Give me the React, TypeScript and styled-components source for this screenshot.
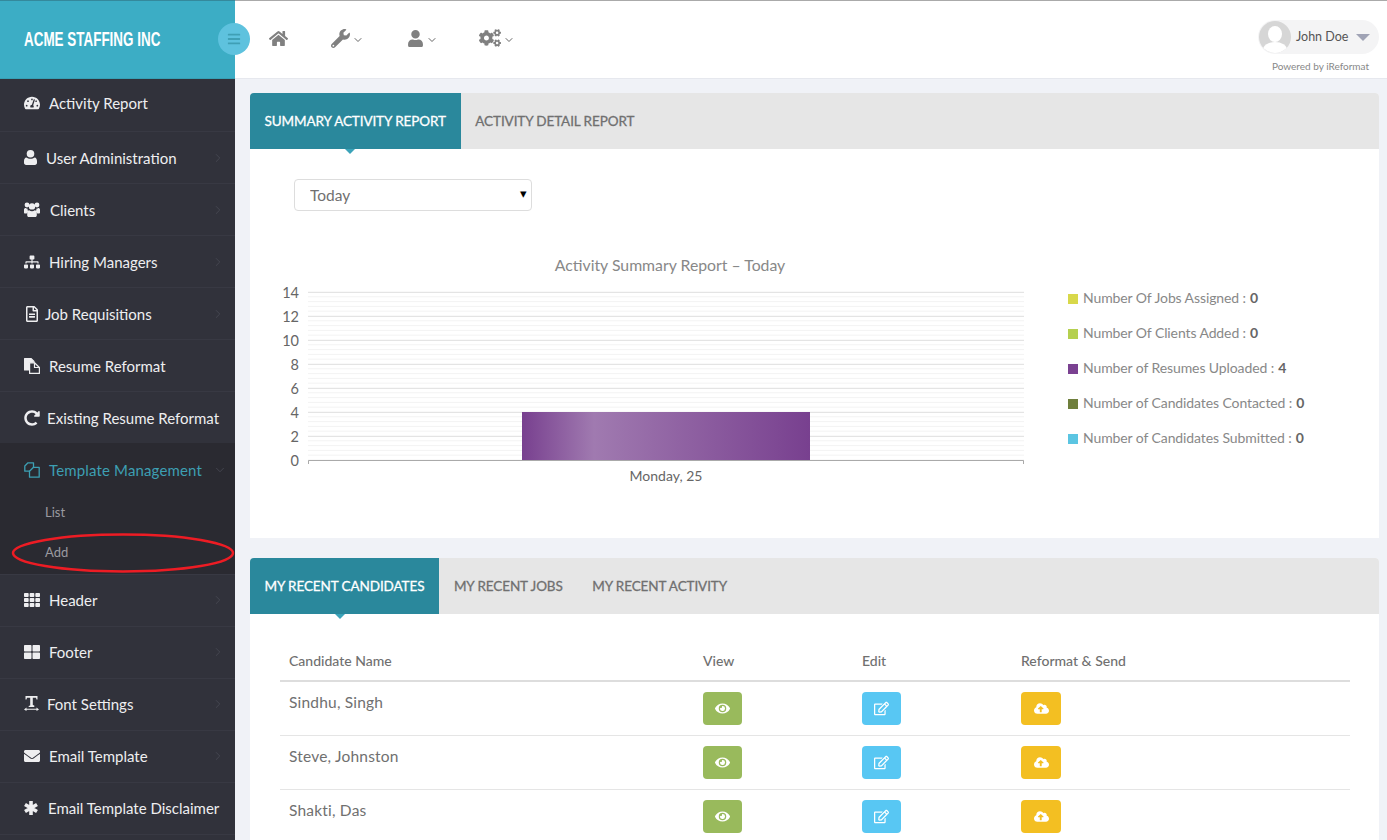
import React from 'react';
import styled, { createGlobalStyle } from 'styled-components';
import { ChevronDown, ChevronRight } from 'lucide-react';
import {
  FaBars,
  FaCloudUploadAlt,
  FaCogs,
  FaEnvelope,
  FaEye,
  FaHome,
  FaRedoAlt,
  FaRegEdit,
  FaRegFileAlt,
  FaSitemap,
  FaTachometerAlt,
  FaTh,
  FaThLarge,
  FaUser,
  FaWrench,
} from 'react-icons/fa';

const GlobalStyle = createGlobalStyle`
  html, body {
    margin: 0;
    height: 100%;
    overflow: hidden;
    background: #f0f2f7;
    font-family: Lato, "Open Sans", sans-serif;
  }
  * { box-sizing: border-box; }
`;

const Page = styled.div`
  display: flex;
  height: 840px;
  overflow: hidden;
`;

const Sidebar = styled.aside`
  width: 235px;
  flex: none;
  background: #31323b;
`;

const Brand = styled.div`
  position: relative;
  height: 79px;
  padding: 0 0 2px 24px;
  display: flex;
  align-items: center;
  background: #3cadc5;
  border-top: 1px solid #34899c;
  border-bottom: 1px solid #36a0b6;
`;

const BrandName = styled.span`
  color: #fff;
  font-family: "Liberation Sans", sans-serif;
  font-size: 21px;
  font-weight: 700;
  white-space: nowrap;
  transform: scaleX(0.64);
  transform-origin: left center;
`;

const Toggle = styled.div`
  position: absolute;
  left: 218px;
  top: 22px;
  width: 32px;
  height: 32px;
  border-radius: 50%;
  background: #5ec2de;
  color: #3f9fb5;
  display: flex;
  align-items: center;
  justify-content: center;
  font-size: 14px;
`;

const NavRow = styled.div<{ $first?: boolean; $open?: boolean; $tail?: boolean }>`
  height: 52px;
  display: flex;
  align-items: center;
  padding: ${(p) => (p.$first ? '0 10px 6px 24px' : p.$tail ? '0 10px 2px 24px' : p.$open ? '0 8px 0 24px' : '0 10px 0 24px')};
  border-top: 1px solid ${(p) => (p.$first || p.$open ? 'transparent' : '#383943')};
  color: ${(p) => (p.$open ? '#3d9fb3' : '#eeeef0')};
  font-size: 15px;
  letter-spacing: ${(p) => (p.$open ? '0.15px' : '0')};
  white-space: nowrap;
`;

const NavEnd = styled.div`
  border-top: 1px solid #383943;
`;

const NavIcon = styled.span<{ $w: number }>`
  width: ${(p) => p.$w}px;
  flex: none;
  display: flex;
  font-size: 16px;
`;

const NavLabel = styled.span`
  flex: 1;
`;

const NavArrow = styled.span`
  display: flex;
  color: #474852;
`;

const OpenGroup = styled.div`
  position: relative;
  height: 131px;
  background: #2a2a31;
`;

const SubItem = styled.div`
  height: 40px;
  padding: 0 0 6px 45px;
  display: flex;
  align-items: center;
  color: #9a9aa0;
  font-size: 13px;
`;

const Circled = styled.svg`
  position: absolute;
  left: 11px;
  top: 89px;
  width: 224px;
  height: 42px;
`;

const Main = styled.main`
  flex: 1;
  min-width: 0;
`;

const TopBar = styled.header`
  height: 79px;
  background: #fff;
  border-top: 1px solid #aaa;
  border-bottom: 1px solid #e6e8ee;
  display: flex;
  justify-content: space-between;
  padding-left: 34px;
  padding-right: 8px;
`;

const TopIcons = styled.div`
  display: flex;
  padding-top: 27px;
  color: #808080;
`;

const TopIcon = styled.span<{ $w: number; $size: number }>`
  width: ${(p) => p.$w}px;
  height: 20px;
  display: flex;
  align-items: center;
  gap: 2px;
  font-size: ${(p) => p.$size}px;
`;

const Chevron = styled.span`
  display: flex;
  margin-top: 3px;
  color: #666;
`;

const UserBox = styled.div`
  display: flex;
  flex-direction: column;
  align-items: flex-end;
  padding-top: 19px;
`;

const UserPill = styled.div`
  width: 121px;
  height: 34px;
  padding: 0 9px 0 1px;
  border-radius: 17px;
  background: #f4f4f5;
  display: flex;
  align-items: center;
  color: #555;
  font-size: 12.5px;
`;

const UserName = styled.span`
  flex: 1;
  margin: 0 0 1px 5px;
`;

const Caret = styled.span`
  width: 0;
  height: 0;
  border-left: 7.5px solid transparent;
  border-right: 7.5px solid transparent;
  border-top: 7px solid #a0a3b5;
`;

const Powered = styled.div`
  margin: 6px 10px 0 0;
  color: #888;
  font-size: 10px;
`;

const Content = styled.div`
  padding: 14px 8px 0 15px;
  display: flex;
  flex-direction: column;
  gap: 20px;
`;

const Panel = styled.section<{ $h?: number }>`
  background: #fff;
  border-radius: 4px 4px 0 0;
  height: ${(p) => (p.$h ? `${p.$h}px` : 'auto')};
`;

const Tabs = styled.div`
  display: flex;
  height: 56px;
  background: #e6e6e6;
  border-radius: 4px 4px 0 0;
`;

const Tab = styled.div<{ $active?: boolean }>`
  position: relative;
  padding: 0 15px 1px 14.5px;
  display: flex;
  align-items: center;
  color: ${(p) => (p.$active ? '#fff' : '#707070')};
  background: ${(p) => (p.$active ? '#2a889c' : 'transparent')};
  border-radius: ${(p) => (p.$active ? '4px 0 0 0' : '0')};
  font-size: 13.5px;
  letter-spacing: -0.1px;
  -webkit-text-stroke: 0.3px currentColor;
  white-space: nowrap;

  ${(p) =>
    p.$active &&
    `&::after {
      content: '';
      position: absolute;
      left: 50%;
      bottom: -5px;
      margin-left: -10px;
      border-left: 5px solid transparent;
      border-right: 5px solid transparent;
      border-top: 5px solid #3ba3b9;
    }`}
`;

const SelectWrap = styled.div`
  position: relative;
  width: 238px;
  margin: 30px 0 0 44px;

  &::after {
    content: '▾';
    position: absolute;
    right: 5px;
    top: 6px;
    color: #000;
    font-size: 13px;
  }
`;

const RangeSelect = styled.select`
  width: 100%;
  height: 32px;
  padding-left: 15px;
  border: 1px solid #ddd;
  border-radius: 4px;
  background: #fff;
  color: #707070;
  font-family: inherit;
  font-size: 15.5px;
  appearance: none;
`;

const ChartRow = styled.div`
  display: flex;
  margin-top: 44px;
`;

const ChartArea = styled.div`
  width: 818px;
  flex: none;
`;

const ChartTitle = styled.div`
  height: 27px;
  padding-left: 22px;
  text-align: center;
  color: #888;
  font-size: 15.8px;
`;

const ChartSvg = styled.svg`
  display: block;
  width: 818px;
  height: 220px;
`;

const Legend = styled.ul`
  list-style: none;
  margin: 25px 0 0 0;
  padding: 0;
`;

const LegendItem = styled.li`
  height: 35px;
  display: flex;
  align-items: center;
  color: #888;
  font-size: 14px;
  letter-spacing: -0.1px;
`;

const Swatch = styled.span<{ $color: string }>`
  width: 10px;
  height: 10px;
  margin: 2px 5px 0 0;
  background: ${(p) => p.$color};
`;

const LegendValue = styled.b`
  margin-left: 4px;
  color: #666;
`;

const TableWrap = styled.div`
  padding: 20px 29px 0 30px;
`;

const Table = styled.table`
  width: 100%;
  border-collapse: collapse;
  table-layout: fixed;
`;

const Th = styled.th<{ $w?: number }>`
  width: ${(p) => (p.$w ? `${p.$w}px` : 'auto')};
  height: 47px;
  padding: 6px 9px 0;
  border-bottom: 2px solid #ddd;
  text-align: left;
  color: #707070;
  font-size: 14px;
  font-weight: 500;
`;

const Td = styled.td`
  height: 54px;
  padding: 10px 9px 0;
  border-bottom: 1px solid #e5e5e5;
  vertical-align: top;
  color: #707070;
  font-size: 15.5px;
  line-height: 21px;
  letter-spacing: 0.2px;
`;

const ActionButton = styled.div<{ $color: string; $w: number }>`
  width: ${(p) => p.$w}px;
  height: 33px;
  border-radius: 4px;
  background: ${(p) => p.$color};
  color: #fff;
  display: flex;
  align-items: center;
  justify-content: center;
  font-size: 15px;
`;

// Font Awesome 4 glyphs that the icon package draws differently
const UsersIcon = () => (
  <svg width="16" height="15" viewBox="0 0 16 15" fill="currentColor">
    <circle cx="3" cy="3" r="2.4" />
    <circle cx="13" cy="3" r="2.4" />
    <circle cx="8" cy="4.4" r="3.2" />
    <path d="M0 7.6C0 6.6.8 6 1.6 6c.6.5 1.2.7 2 .7-.1 1.2.2 2.2 1 3-.9.3-1.6 1-1.9 1.7H1c-.6 0-1-.4-1-1z" />
    <path d="M16 7.6c0-1-.8-1.6-1.6-1.6-.6.5-1.2.7-2 .7.1 1.2-.2 2.2-1 3 .9.3 1.6 1 1.9 1.7H15c.6 0 1-.4 1-1z" />
    <path d="M5.2 8.2c.8.7 1.7 1 2.8 1s2-.3 2.8-1c1.3.1 2 1.2 2 3v2c0 1-.7 1.8-1.7 1.8H4.900c-1 0-1.700-.8-1.700-1.800v-2c0-1.800.7-2.900 2-3z" />
  </svg>
);

const SmallUserIcon = () => (
  <svg width="13" height="15" viewBox="0 0 13 15" fill="currentColor">
    <circle cx="6.500" cy="3.800" r="3.800" />
    <path d="M2.400 7.400c1.100.9 2.500 1.300 4.100 1.300s3-.4 4.100-1.300c1.500.2 2.400 1.600 2.400 3.700v1.700c0 1.300-.9 2.200-2.100 2.200H2.100C.9 15 0 14.100 0 12.800v-1.700c0-2.100.9-3.500 2.400-3.700z" />
  </svg>
);

const ResumeIcon = () => (
  <svg width="16" height="16" viewBox="0 0 16 16" stroke="currentColor" strokeWidth="1.200" strokeLinejoin="round">
    <path d="M.6.6h6.600L10 3.400V12H.6z" fill="currentColor" />
    <path d="M5.600 4.800h4.900l4.900 4.700v5.900H5.600z" fill="#31323b" />
    <path d="M10.500 4.800v4.700h4.900" fill="none" />
  </svg>
);

const TemplateIcon = () => (
  <svg width="16" height="16" viewBox="0 0 16 16" fill="none" stroke="currentColor" strokeWidth="1.300" strokeLinejoin="round">
    <path d="M4 .8h5.500v8.400H.8V4z" />
    <path d="M9.500 5.300h5.700v9.900H5.500V9.200z" fill="#2a2a31" />
  </svg>
);

const FontIcon = () => (
  <svg width="15" height="15" viewBox="0 0 15 15" fill="currentColor">
    <path d="M1.500 0h12v3.400h-1l-.5-1.700H8.800v7.200l1.500.5V11H4.700V9.900l1.500-.5V1.700H3l-.5 1.700h-1z" />
    <path d="M2.500 11.500v1.300h10v-1.300L15 13.500 12.500 15v-1.200h-10V15L0 13.500z" />
  </svg>
);

const AsteriskIcon = () => (
  <svg width="14" height="14" viewBox="0 0 14 14" stroke="currentColor" strokeWidth="3.600">
    <path d="M7 0v14M1 3.500l12 7M13 3.500l-12 7" />
  </svg>
);

const navTop = [
  { label: 'Activity Report', icon: <FaTachometerAlt />, w: 25 },
  { label: 'User Administration', icon: <SmallUserIcon />, w: 22, arrow: true },
  { label: 'Clients', icon: <UsersIcon />, w: 26, arrow: true },
  { label: 'Hiring Managers', icon: <FaSitemap />, w: 25, arrow: true },
  { label: 'Job Requisitions', icon: <FaRegFileAlt />, w: 21, arrow: true },
  { label: 'Resume Reformat', icon: <ResumeIcon />, w: 25 },
  { label: 'Existing Resume Reformat', icon: <FaRedoAlt />, w: 23 },
];

const navBottom = [
  { label: 'Header', icon: <FaTh />, w: 25, arrow: true },
  { label: 'Footer', icon: <FaThLarge />, w: 25, arrow: true },
  { label: 'Font Settings', icon: <FontIcon />, w: 23, arrow: true },
  { label: 'Email Template', icon: <FaEnvelope />, w: 25, arrow: true },
  { label: 'Email Template Disclaimer', icon: <AsteriskIcon />, w: 24 },
];

const legend = [
  { color: '#d8d84a', label: 'Number Of Jobs Assigned :', value: 0 },
  { color: '#b5d04f', label: 'Number Of Clients Added :', value: 0 },
  { color: '#7a4191', label: 'Number of Resumes Uploaded :', value: 4 },
  { color: '#6f7f3c', label: 'Number of Candidates Contacted :', value: 0 },
  { color: '#5bc5e2', label: 'Number of Candidates Submitted :', value: 0 },
];

const candidates = ['Sindhu, Singh', 'Steve, Johnston', 'Shakti, Das'];

const chartX0 = 58;
const chartX1 = 774;
const chartY0 = 178;
const unit = 12;

const ActivityChart = () => {
  const minor: number[] = [];
  for (let v = 0; v <= 14.01; v += 0.4) minor.push(v);
  const major = [0, 2, 4, 6, 8, 10, 12, 14];

  return (
    <ChartSvg viewBox="0 0 818 220">
      <defs>
        <linearGradient id="barFill" x1="0" x2="1" y1="0" y2="0">
          <stop offset="0" stopColor="#78408f" />
          <stop offset="0.25" stopColor="#a07ab0" />
          <stop offset="1" stopColor="#78408f" />
        </linearGradient>
      </defs>
      {minor.map((v) => (
        <line key={v} x1={chartX0} x2={chartX1} y1={chartY0 - v * unit} y2={chartY0 - v * unit} stroke="#f3f3f3" />
      ))}
      {major.map((v) => (
        <g key={v}>
          <line x1={chartX0} x2={chartX1} y1={chartY0 - v * unit + 0.5} y2={chartY0 - v * unit + 0.5} stroke="#e4e4e4" />
          <text
            x={chartX0 - 9}
            y={chartY0 - v * unit + 5.5}
            textAnchor="end"
            fontSize="14.5"
            fill="#666"
            fontFamily="Lato, sans-serif"
          >
            {v}
          </text>
        </g>
      ))}
      <rect x="272" y={chartY0 - 48} width="288" height="48" fill="url(#barFill)" />
      <path d={`M${chartX0 + 0.5} ${chartY0 + 4}V${chartY0 + 0.5}H${chartX1 - 0.5}V${chartY0 + 4}`} fill="none" stroke="#aaa" />
      <text x="416" y="199" textAnchor="middle" fontSize="14" fill="#666" fontFamily="Lato, sans-serif">
        Monday, 25
      </text>
    </ChartSvg>
  );
};

const App: React.FC = () => {
  return (
    <Page>
      <GlobalStyle />
      <Sidebar>
        <Brand>
          <BrandName>ACME STAFFING INC</BrandName>
          <Toggle>
            <FaBars />
          </Toggle>
        </Brand>
        {navTop.map((n, i) => (
          <NavRow key={n.label} $first={i === 0}>
            <NavIcon $w={n.w}>{n.icon}</NavIcon>
            <NavLabel>{n.label}</NavLabel>
            {n.arrow && (
              <NavArrow>
                <ChevronRight size={14} strokeWidth={1.5} />
              </NavArrow>
            )}
          </NavRow>
        ))}
        <OpenGroup>
          <NavRow $open>
            <NavIcon $w={25}>
              <TemplateIcon />
            </NavIcon>
            <NavLabel>Template Management</NavLabel>
            <NavArrow>
              <ChevronDown size={14} strokeWidth={1.5} />
            </NavArrow>
          </NavRow>
          <SubItem>List</SubItem>
          <SubItem>Add</SubItem>
          <Circled viewBox="0 0 224 42">
            <ellipse cx="112" cy="21" rx="110" ry="18.5" fill="none" stroke="#ed1c24" strokeWidth="2.500" />
          </Circled>
        </OpenGroup>
        {navBottom.map((n) => (
          <NavRow key={n.label} $tail>
            <NavIcon $w={n.w}>{n.icon}</NavIcon>
            <NavLabel>{n.label}</NavLabel>
            {n.arrow && (
              <NavArrow>
                <ChevronRight size={14} strokeWidth={1.5} />
              </NavArrow>
            )}
          </NavRow>
        ))}
        <NavEnd />
      </Sidebar>
      <Main>
        <TopBar>
          <TopIcons>
            <TopIcon $w={62} $size={19}>
              <FaHome />
            </TopIcon>
            <TopIcon $w={76} $size={19}>
              <FaWrench />
              <Chevron>
                <ChevronDown size={12} strokeWidth={2} />
              </Chevron>
            </TopIcon>
            <TopIcon $w={72} $size={17}>
              <FaUser />
              <Chevron>
                <ChevronDown size={12} strokeWidth={2} />
              </Chevron>
            </TopIcon>
            <TopIcon $w={50} $size={22}>
              <FaCogs />
              <Chevron>
                <ChevronDown size={12} strokeWidth={2} />
              </Chevron>
            </TopIcon>
          </TopIcons>
          <UserBox>
            <UserPill>
              <svg width="32" height="32" viewBox="0 0 32 32">
                <defs>
                  <clipPath id="avatarClip">
                    <circle cx="16" cy="16" r="16" />
                  </clipPath>
                </defs>
                <g clipPath="url(#avatarClip)">
                  <rect width="32" height="32" fill="#d6d6d6" />
                  <ellipse cx="16" cy="13" rx="7" ry="8" fill="#fff" />
                  <ellipse cx="16" cy="29" rx="12" ry="8" fill="#fff" />
                </g>
              </svg>
              <UserName>John Doe</UserName>
              <Caret />
            </UserPill>
            <Powered>Powered by iReformat</Powered>
          </UserBox>
        </TopBar>
        <Content>
          <Panel $h={445}>
            <Tabs>
              <Tab $active>SUMMARY ACTIVITY REPORT</Tab>
              <Tab>ACTIVITY DETAIL REPORT</Tab>
            </Tabs>
            <SelectWrap>
              <RangeSelect defaultValue="Today">
                <option>Today</option>
              </RangeSelect>
            </SelectWrap>
            <ChartRow>
              <ChartArea>
                <ChartTitle>Activity Summary Report – Today</ChartTitle>
                <ActivityChart />
              </ChartArea>
              <Legend>
                {legend.map((l) => (
                  <LegendItem key={l.label}>
                    <Swatch $color={l.color} />
                    {l.label}
                    <LegendValue>{l.value}</LegendValue>
                  </LegendItem>
                ))}
              </Legend>
            </ChartRow>
          </Panel>
          <Panel>
            <Tabs>
              <Tab $active>MY RECENT CANDIDATES</Tab>
              <Tab>MY RECENT JOBS</Tab>
              <Tab>MY RECENT ACTIVITY</Tab>
            </Tabs>
            <TableWrap>
              <Table>
                <thead>
                  <tr>
                    <Th $w={414}>Candidate Name</Th>
                    <Th $w={159}>View</Th>
                    <Th $w={159}>Edit</Th>
                    <Th>Reformat &amp; Send</Th>
                  </tr>
                </thead>
                <tbody>
                  {candidates.map((c) => (
                    <tr key={c}>
                      <Td>{c}</Td>
                      <Td>
                        <ActionButton $color="#99ba5c" $w={39}>
                          <FaEye />
                        </ActionButton>
                      </Td>
                      <Td>
                        <ActionButton $color="#58c7f3" $w={39}>
                          <FaRegEdit />
                        </ActionButton>
                      </Td>
                      <Td>
                        <ActionButton $color="#f3bf22" $w={40}>
                          <FaCloudUploadAlt />
                        </ActionButton>
                      </Td>
                    </tr>
                  ))}
                </tbody>
              </Table>
            </TableWrap>
          </Panel>
        </Content>
      </Main>
    </Page>
  );
};

export default App;
